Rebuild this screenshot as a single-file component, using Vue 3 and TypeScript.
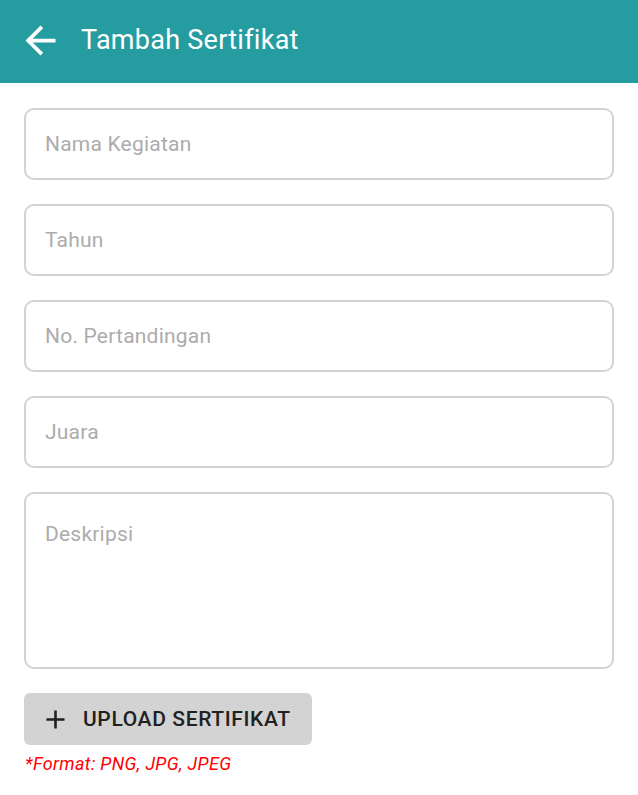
<script setup lang="ts">
import { reactive, ref } from 'vue'

type FieldKey = 'nama' | 'tahun' | 'nomor' | 'juara'

const fields: { key: FieldKey; label: string }[] = [
  { key: 'nama', label: 'Nama Kegiatan' },
  { key: 'tahun', label: 'Tahun' },
  { key: 'nomor', label: 'No. Pertandingan' },
  { key: 'juara', label: 'Juara' },
]

const form = reactive<Record<FieldKey, string>>({ nama: '', tahun: '', nomor: '', juara: '' })
const description = ref('')
</script>

<template>
  <div class="page">
    <header class="bar">
      <button class="back" type="button" aria-label="Kembali">
        <svg viewBox="0 0 24 24" aria-hidden="true">
          <path d="M20 11H7.83l5.59-5.59L12 4l-8 8 8 8 1.41-1.41L7.83 13H20v-2z" />
        </svg>
      </button>
      <h1 class="title">Tambah Sertifikat</h1>
    </header>
    <form class="form" @submit.prevent>
      <input
        v-for="field in fields"
        :key="field.key"
        v-model="form[field.key]"
        class="control"
        type="text"
        :aria-label="field.label"
        :placeholder="field.label"
      />
      <textarea v-model="description" class="control area" aria-label="Deskripsi" placeholder="Deskripsi"></textarea>
      <div class="upload">
        <button class="upload-button" type="button">
          <svg viewBox="0 0 24 24" aria-hidden="true">
            <path d="M19 13h-6v6h-2v-6H5v-2h6V5h2v6h6v2z" />
          </svg>
          <span>UPLOAD SERTIFIKAT</span>
        </button>
        <p class="hint">*Format: PNG, JPG, JPEG</p>
      </div>
    </form>
  </div>
</template>

<style>
body {
  background: #fff;
}
</style>

<style scoped>
.page {
  font-family: Roboto, 'Liberation Sans', sans-serif;
}
.bar {
  display: flex;
  align-items: center;
  gap: 18px;
  box-sizing: border-box;
  height: 83px;
  padding: 0 18px 3px;
  background: #259da0;
  color: #fff;
}
.back {
  display: flex;
  padding: 0;
  border: 0;
  background: none;
  color: inherit;
}
.back svg {
  width: 45px;
  height: 45px;
  fill: currentColor;
}
.title {
  margin: 0;
  font-size: 27px;
  font-weight: 400;
  line-height: 32px;
  letter-spacing: 0.01em;
}
.form {
  display: flex;
  flex-direction: column;
  gap: 24px;
  padding: 25px 24px;
}
.control {
  display: block;
  box-sizing: border-box;
  width: 100%;
  height: 72px;
  margin: 0;
  padding: 0 19px;
  border: 2px solid #d3d3d3;
  border-radius: 10px;
  background: #fff;
  color: #212121;
  font-family: inherit;
  font-size: 21px;
  line-height: 28px;
  letter-spacing: 0.01em;
  outline: none;
  resize: none;
}
.control::placeholder {
  color: #acacac;
  opacity: 1;
}
.area {
  height: 177px;
  padding-top: 26px;
}
.upload {
  display: flex;
  flex-direction: column;
  align-items: flex-start;
  gap: 6px;
}
.upload-button {
  display: flex;
  align-items: center;
  gap: 12px;
  height: 52px;
  padding: 0 21px 0 16px;
  border: 0;
  border-radius: 6px;
  background: #d3d3d3;
  color: #212121;
  font-family: inherit;
  font-size: 21px;
  font-weight: 500;
  letter-spacing: 0.03em;
}
.upload-button svg {
  width: 31px;
  height: 31px;
  fill: currentColor;
}
.hint {
  margin: 0;
  padding: 0 1px;
  color: #f00;
  font-size: 18px;
  font-style: italic;
  line-height: 26px;
  letter-spacing: 0.02em;
}
</style>
